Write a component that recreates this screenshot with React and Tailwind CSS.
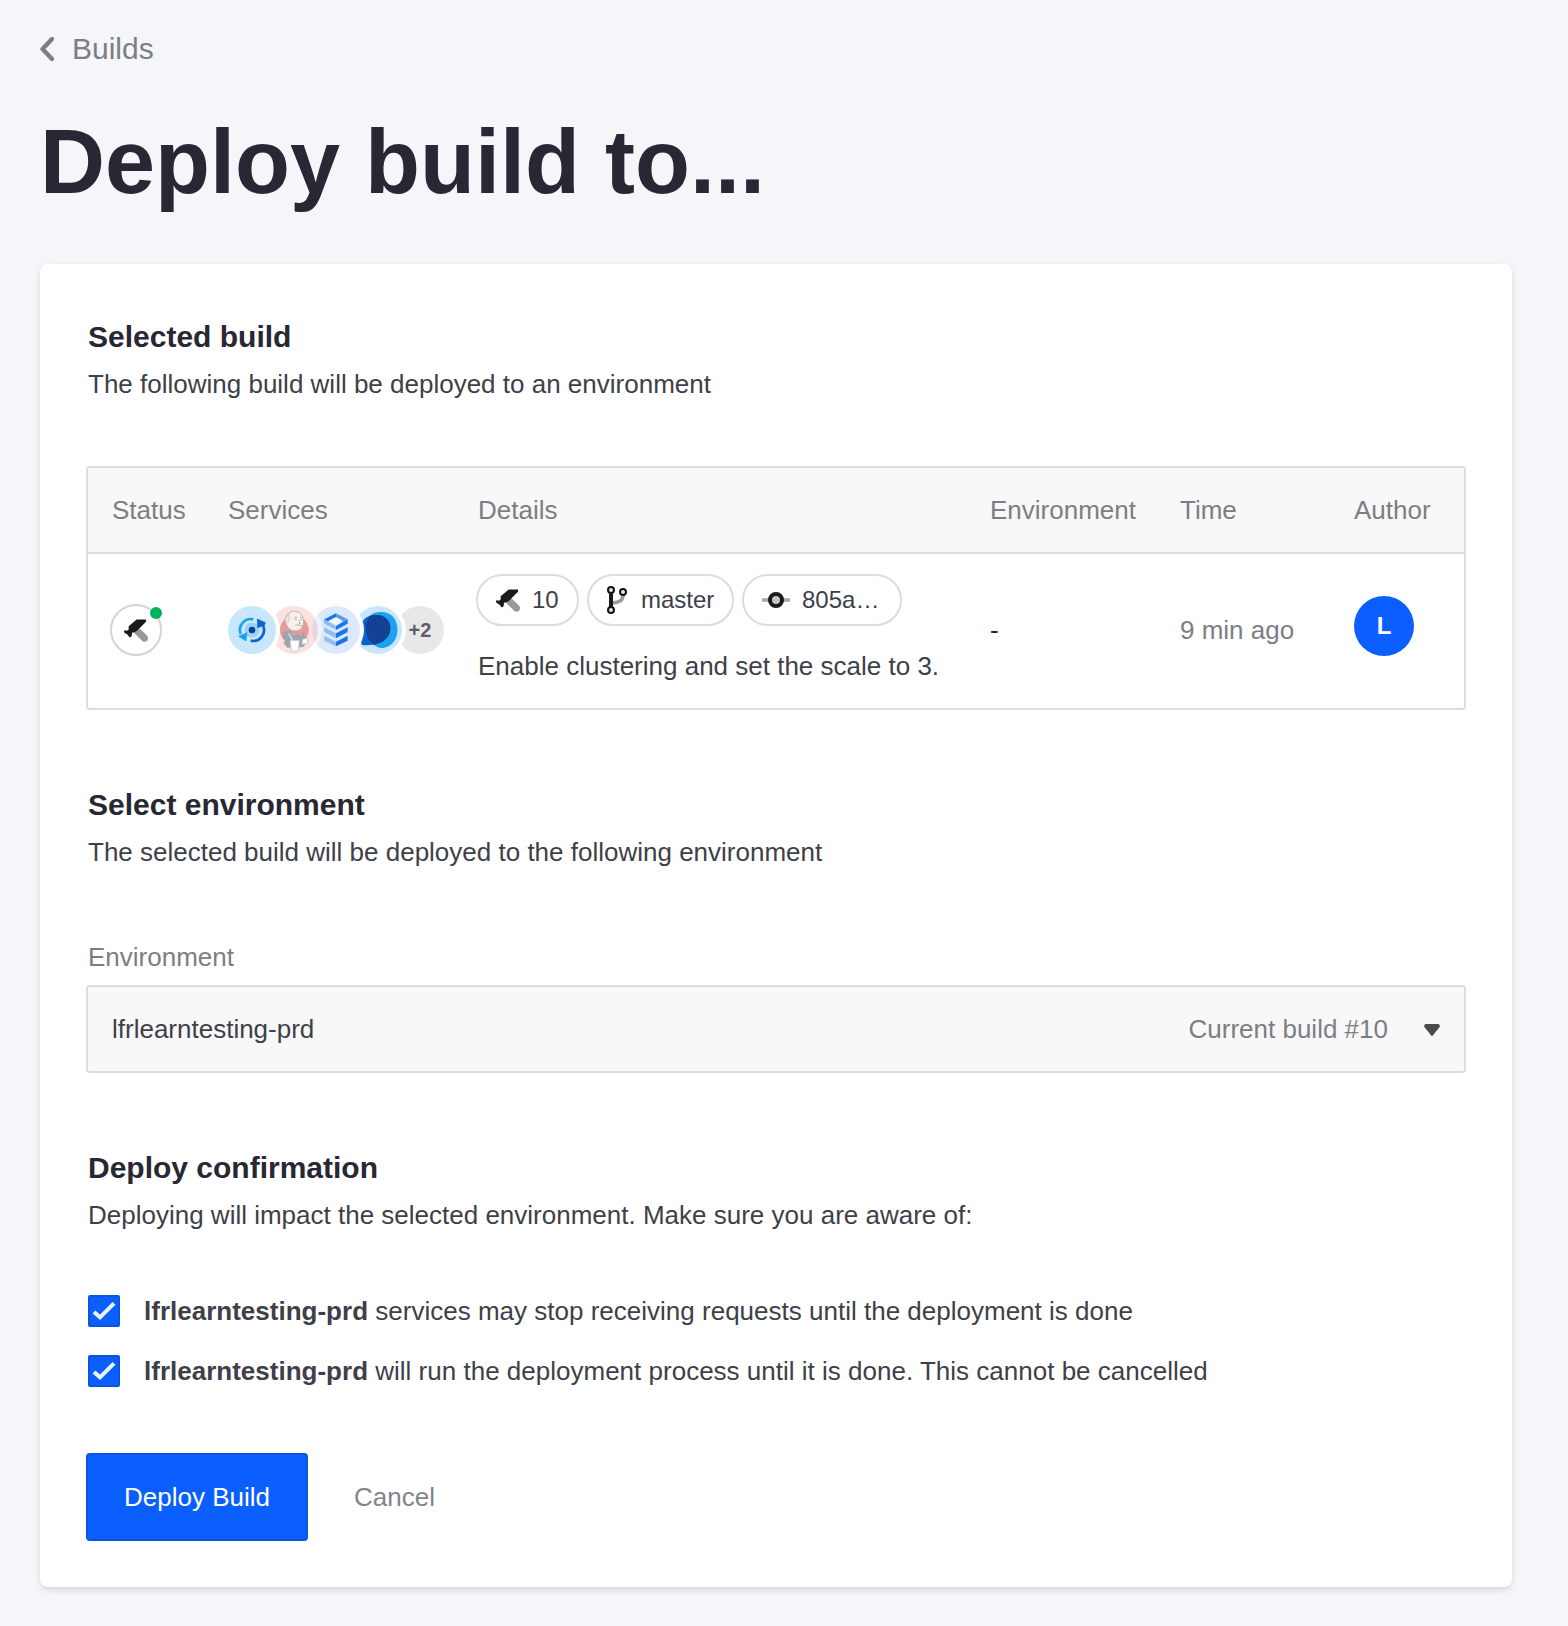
function Hammer() {
  return (
    <svg viewBox="108 83 72 68" className="h-[23px] w-6 shrink-0">
      <path d="M138 124 L154 110 L177 132 Q183 140 178 147 Q171 153 164 149 Z" fill="#999" />
      <path d="M146 84 H172 Q176 84 174 91 L147 118 Q141 124 132 124 L131 134 L125 138 L118 129 L109 124 L108 118 L111 116 L117 118 L122 114 L122 104 Z" fill="#1a1a1a" />
    </svg>
  );
}

function Branch() {
  return (
    <svg viewBox="441 78 60 84" className="h-7 w-5 shrink-0">
      <path d="M489 106 C488 124 477 126 458 129" fill="none" stroke="#999" strokeWidth="11" />
      <path d="M453 100 V142" stroke="#1a1a1a" strokeWidth="12" />
      <g fill="#e6e6e6" stroke="#111" strokeWidth="6">
        <circle cx="453" cy="90" r="9" />
        <circle cx="453" cy="150" r="9" />
        <circle cx="489" cy="96" r="9" />
      </g>
    </svg>
  );
}

function Commit() {
  return (
    <svg viewBox="906 95 84 48" className="h-4 w-7 shrink-0">
      <path d="M906 119 H990" stroke="#aaa" strokeWidth="11" />
      <circle cx="948" cy="119" r="18" fill="#c6c6c6" stroke="#1a1a1a" strokeWidth="12" />
    </svg>
  );
}

function SyncService() {
  return (
    <svg viewBox="0 0 144 144" className="size-12">
      <circle cx="72" cy="72" r="22" fill="#9bd2f5" />
      <circle cx="72" cy="72" r="10" fill="#134194" />
      <path d="M76 40 A33 33 0 0 0 38 84" fill="none" stroke="#1ba1ee" strokeWidth="8" />
      <path d="M32 91 L57 80 L54 105 Z" fill="#1ba1ee" stroke="#1ba1ee" strokeWidth="2" />
      <path d="M68 104 A33 33 0 0 0 105 58" fill="none" stroke="#0b63ce" strokeWidth="8" />
      <path d="M88 39 L112 50 L110 57 L89 65 Z" fill="#0b63ce" stroke="#0b63ce" strokeWidth="2" />
    </svg>
  );
}

function ButlerService() {
  return (
    <svg viewBox="0 0 144 144" className="size-12">
      <circle cx="73" cy="72" r="43" fill="#d33833" />
      <path d="M39 80 L60 74 L100 82 C108 95 108 110 100 122 L52 124 L42 112 Q50 100 39 96 Z" fill="#335061" stroke="#444" strokeWidth="2" />
      <path d="M50 58 C42 44 46 26 60 19 C78 10 98 20 100 40 C103 54 98 68 86 73 C74 78 60 74 54 64 Z" fill="#f7e3cb" stroke="#6b6b6b" strokeWidth="3" />
      <path d="M48 52 Q42 32 57 24 Q60 36 55 48 Z" fill="#d9d5cc" stroke="#777" strokeWidth="2" />
      <path d="M72 36 l10 -3 M90 33 l7 2 M75 41 h6 M91 41 h5 M86 42 l5 10 l-6 2 M76 58 Q86 54 96 60" fill="none" stroke="#666" strokeWidth="3" />
      <path d="M64 74 L80 80 L95 73 L98 89 L81 85 L66 90 Z" fill="#d33833" />
      <path d="M56 82 L68 104" stroke="#fff" strokeWidth="3" />
      <path d="M60 103 H88 L85 134 Q74 138 64 134 Z" fill="#fff" stroke="#8b8b8b" strokeWidth="2.5" />
      <path d="M98 100 L113 96 L113 112 L96 115 Z" fill="#fff" stroke="#8b8b8b" strokeWidth="2.5" />
    </svg>
  );
}

function StackService() {
  return (
    <svg viewBox="0 0 144 144" className="size-12">
      <path d="M72 22 L107 40 L92 47 L72 36 Z" fill="#5d9af3" />
      <path d="M72 22 L37 40 V52 L72 34 Z" fill="#1a73f0" />
      <path d="M37 40 L72 60 V72 L37 53 Z M37 64 L72 82 V97 L37 78 Z M37 89 L72 107 V121 L37 104 Z" fill="#8fbbf6" />
      <path d="M107 40 L72 60 V72 L107 53 Z M107 64 L72 82 V97 L107 78 Z M107 89 L72 107 V121 L107 104 Z" fill="#1a73f0" />
      <path d="M72 33 L92 44 L72 56 L50 45 Z" fill="#f1f6fe" />
    </svg>
  );
}

function BlobService() {
  const back =
    "M54 24 C72 15 100 16 115 30 C130 45 134 70 127 92 C120 114 100 126 82 126 C66 125 50 112 40 92 C31 68 36 34 54 24 Z";
  const front =
    "M109 66 C109 96 82 122 24 117 C17 100 16 72 26 46 C34 32 50 27 70 27 C94 28 109 45 109 66 Z";
  return (
    <svg viewBox="0 0 144 144" className="size-12">
      <clipPath id="blob-back">
        <path d={back} />
      </clipPath>
      <path d={back} fill="#1ba1ee" />
      <path d={front} fill="#0b63ce" />
      <path d={front} fill="#134194" clipPath="url(#blob-back)" />
    </svg>
  );
}

function Section({ title, text }) {
  return (
    <header>
      <h2 className="h-9 text-[30px]/9 font-bold text-[#272833]">{title}</h2>
      <p className="mt-[9px] h-10 text-[26px]/10 text-[#3e3f49]">{text}</p>
    </header>
  );
}

function Chip({ icon, label, className }) {
  return (
    <span className={"flex h-[52px] items-center rounded-full border-2 border-[#dcdcdc] pl-[18px] text-[#3e3f49] " + className}>
      {icon}
      <span className="text-2xl">{label}</span>
    </span>
  );
}

function Confirmation({ children }) {
  return (
    <label className="flex h-10 items-center gap-6 text-[26px]/10 tracking-[0.006px]">
      <span className="size-8 shrink-0 rounded-[2px] border-2 border-[#0b54e0] bg-[#0b5fff]">
        <svg viewBox="6 6 84 84" className="size-7">
          <path d="M18 51 L36 67 L78 25" fill="none" stroke="#f1f2f5" strokeWidth="12" />
        </svg>
      </span>
      <span>
        <b>lfrlearntesting-prd</b> {children}
      </span>
    </label>
  );
}

const columns = "grid grid-cols-[116px_250px_512px_190px_174px_1fr] pl-6";
const bubble = "flex size-12 items-center justify-center rounded-full shadow-[0_0_0_4px_#fff]";

export default function App() {
  return (
    <div className="h-[1626px] w-[1568px] bg-[#f4f6fa] px-10 pt-[31px] font-['Liberation_Sans',sans-serif] text-[#3e3f49]">
      <a className="flex h-9 items-center text-[30px]/9 text-[#7d7e85]">
        <svg viewBox="0 0 14 24" className="mr-[18px] h-6 w-3.5">
          <path d="M12 2 L2.5 12 L12 22" fill="none" stroke="currentColor" strokeWidth="4.4" strokeLinecap="round" strokeLinejoin="round" />
        </svg>
        Builds
      </a>
      <h1 className="mt-[45px] h-[100px] text-[90px]/[100px] font-bold text-[#272833]">Deploy build to...</h1>

      <main className="mt-[52px] h-[1323px] w-[1472px] rounded-lg bg-white px-[46px] pt-[55px] shadow-[0_3px_9px_-2px_rgba(0,0,0,0.2)]">
        <div className="ml-0.5">
          <Section title="Selected build" text="The following build will be deployed to an environment" />
        </div>

        <div className="mt-[62px] h-[244px] rounded-[4px] border-2 border-[#dcdcde]">
          <div className={columns + " h-[86px] items-center border-b-2 border-[#dcdcde] bg-[#f8f8f8] text-[26px] text-[#7d7e85]"}>
            <span>Status</span>
            <span>Services</span>
            <span>Details</span>
            <span>Environment</span>
            <span>Time</span>
            <span>Author</span>
          </div>
          <div className={columns + " h-[154px] items-center pb-0.5 text-[26px]"}>
            <div className="relative -ml-0.5 flex size-[52px] items-center justify-center rounded-full border-2 border-[#d4d4d4]">
              <Hammer />
              <span className="absolute top-px -right-0.5 size-3 rounded-full bg-[#00b25a]" />
            </div>
            <div className="isolate flex -space-x-1.5">
              <span className={bubble + " z-50 bg-[#c8e7fa]"}><SyncService /></span>
              <span className={bubble + " z-40 bg-[#fbc4c4] opacity-50"}><ButlerService /></span>
              <span className={bubble + " z-30 bg-[#dce9fc]"}><StackService /></span>
              <span className={bubble + " z-20 bg-[#c8e7fa]"}><BlobService /></span>
              <span className={bubble + " z-10 bg-[#e8e8e8] text-[20px] font-bold text-[#5c5d66]"}>+2</span>
            </div>
            <div className="flex h-[152px] flex-col pt-5">
              <div className="-ml-0.5 flex gap-2">
                <Chip icon={<Hammer />} label="10" className="w-[103px] gap-3" />
                <Chip icon={<Branch />} label="master" className="w-[147px] gap-3.5" />
                <Chip icon={<Commit />} label="805a…" className="w-[160px] gap-3" />
              </div>
              <p className="mt-5 leading-10 whitespace-nowrap">Enable clustering and set the scale to 3.</p>
            </div>
            <span className="text-[#272833]">-</span>
            <span className="text-[#7d7e85]">9 min ago</span>
            <span className="mb-2 flex size-[60px] items-center justify-center rounded-full bg-[#0b5fff] text-2xl font-bold text-white">L</span>
          </div>
        </div>

        <div className="mt-[77px] ml-0.5">
          <Section title="Select environment" text="The selected build will be deployed to the following environment" />
          <p className="mt-[67px] h-9 text-[26px]/9 text-[#7d7e85]">Environment</p>
        </div>
        <div className="mt-[10px] flex h-[88px] items-center rounded-[4px] border-2 border-[#dcdcde] bg-[#f8f8f8] pr-6 pl-6 text-[26px]">
          <span>lfrlearntesting-prd</span>
          <span className="ml-auto text-[#7d7e85]">Current build #10</span>
          <svg viewBox="0 0 16 12" className="mt-0.5 ml-9 h-3 w-4">
            <path d="M1.5 0 H14.5 Q17 1.5 15 3.8 L9 11.2 Q8 12.6 7 11.2 L1 3.8 Q-1 1.5 1.5 0 Z" fill="#4a4a4a" />
          </svg>
        </div>

        <div className="mt-[77px] ml-0.5">
          <Section title="Deploy confirmation" text="Deploying will impact the selected environment. Make sure you are aware of:" />
          <div className="mt-14 flex flex-col gap-5">
            <Confirmation>services may stop receiving requests until the deployment is done</Confirmation>
            <Confirmation>will run the deployment process until it is done. This cannot be cancelled</Confirmation>
          </div>
        </div>

        <div className="mt-[62px] flex items-center gap-[46px] text-[26px]">
          <button className="h-[88px] w-[222px] rounded-[4px] border-2 border-[#0b54e0] bg-[#0b5fff] text-white">Deploy Build</button>
          <button className="text-[#83848b]">Cancel</button>
        </div>
      </main>
    </div>
  );
}
